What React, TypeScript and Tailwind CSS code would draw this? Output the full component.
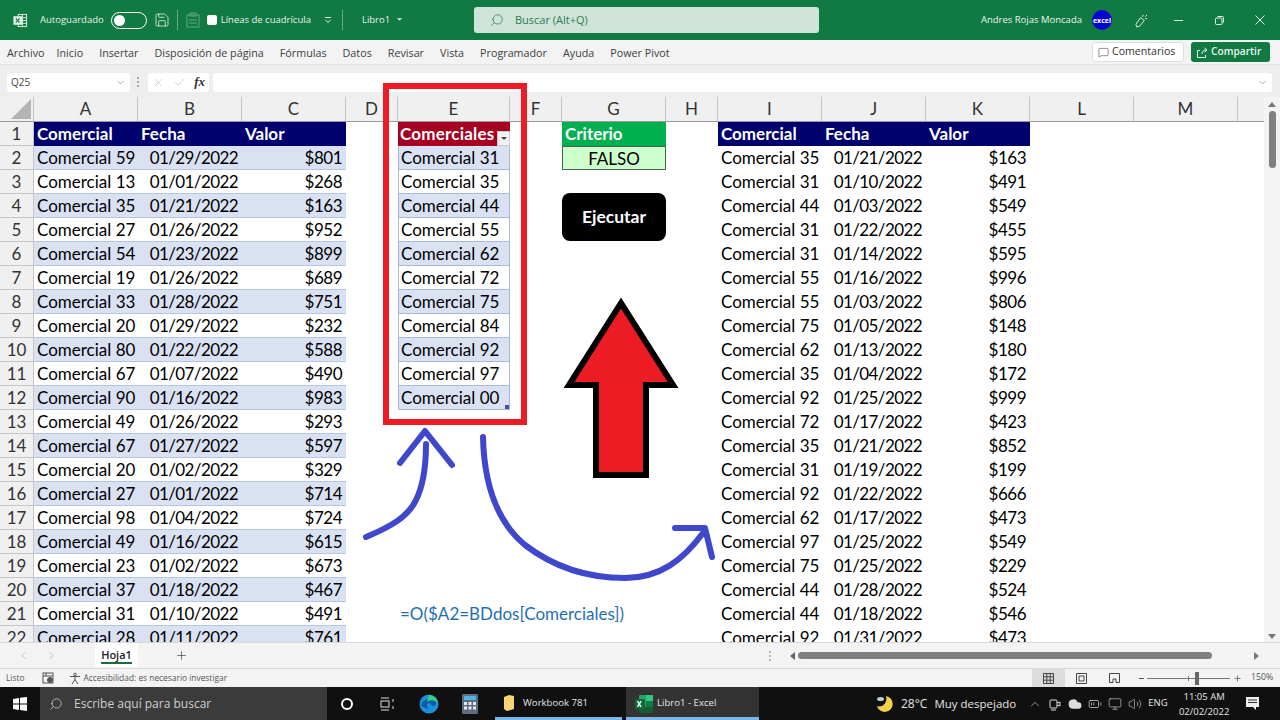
import {
  Save, Search, ChevronDown, X, Check, ChevronLeft, ChevronRight, Plus, MessageSquare,
  ChevronUp, Cloud, Volume2, Monitor, BatteryMedium,
} from "lucide-react"

const colNames = ["A", "B", "C", "D", "E", "F", "G", "H", "I", "J", "K", "L", "M"]
const colWidths = [104, 104, 104, 52, 112, 52, 104, 52, 104, 104, 104, 104, 104]

const leftRows = [
  ["59", "01/29/2022", "801"], ["13", "01/01/2022", "268"], ["35", "01/21/2022", "163"],
  ["27", "01/26/2022", "952"], ["54", "01/23/2022", "899"], ["19", "01/26/2022", "689"],
  ["33", "01/28/2022", "751"], ["20", "01/29/2022", "232"], ["80", "01/22/2022", "588"],
  ["67", "01/07/2022", "490"], ["90", "01/16/2022", "983"], ["49", "01/26/2022", "293"],
  ["67", "01/27/2022", "597"], ["20", "01/02/2022", "329"], ["27", "01/01/2022", "714"],
  ["98", "01/04/2022", "724"], ["49", "01/16/2022", "615"], ["23", "01/02/2022", "673"],
  ["37", "01/18/2022", "467"], ["31", "01/10/2022", "491"], ["28", "01/11/2022", "761"],
]

const rightRows = [
  ["35", "01/21/2022", "163"], ["31", "01/10/2022", "491"], ["44", "01/03/2022", "549"],
  ["31", "01/22/2022", "455"], ["31", "01/14/2022", "595"], ["55", "01/16/2022", "996"],
  ["55", "01/03/2022", "806"], ["75", "01/05/2022", "148"], ["62", "01/13/2022", "180"],
  ["35", "01/04/2022", "172"], ["92", "01/25/2022", "999"], ["72", "01/17/2022", "423"],
  ["35", "01/21/2022", "852"], ["31", "01/19/2022", "199"], ["92", "01/22/2022", "666"],
  ["62", "01/17/2022", "473"], ["97", "01/25/2022", "549"], ["75", "01/25/2022", "229"],
  ["44", "01/28/2022", "524"], ["44", "01/18/2022", "546"], ["92", "01/31/2022", "473"],
]

const comerciales = ["31", "35", "44", "55", "62", "72", "75", "84", "92", "97", "00"]

const menuItems = ["Inicio", "Insertar", "Disposición de página", "Fórmulas", "Datos", "Revisar", "Vista", "Programador", "Ayuda", "Power Pivot"]

function ExcelLogo({ size = 16 }: { size?: number }) {
  return (
    <svg width={size} height={size} viewBox="0 0 20 20">
      <rect x="5" y="1" width="14" height="18" rx="1" fill="#21a366" />
      <rect x="12" y="1" width="7" height="6" fill="#33c481" />
      <rect x="12" y="7" width="7" height="6" fill="#107c41" />
      <rect x="5" y="13" width="14" height="6" fill="#185c37" />
      <rect x="1" y="5" width="10" height="10" rx="1" fill="#0f6b3a" />
      <path d="M3.500 7.200l3.600 5.600M7.100 7.200l-3.600 5.600" stroke="#fff" strokeWidth="1.400" />
    </svg>
  )
}

function Title() {
  return (
    <div className="flex h-[40px] items-center whitespace-nowrap bg-[#117a43] text-[9.5px] text-[#e4f1ea]">
      <div className="flex w-[474px] shrink-0 items-center">
        <svg width="15" height="15" viewBox="0 0 16 16" fill="none" stroke="#e4f1ea" className="ml-[13px]">
          <rect x="5.500" y="1.500" width="9" height="13" fill="#117a43" />
          <path d="M5.500 5h9M5.500 8h9M5.500 11h9M10 1.500v13" />
          <rect x="1" y="4" width="8" height="8" fill="#e4f1ea" />
          <path d="M3 5.800l4 4.400M7 5.800l-4 4.400" stroke="#117a43" strokeWidth="1.200" />
        </svg>
        <span className="ml-[12px]">Autoguardado</span>
        <div className="ml-[7px] flex h-[17px] w-[36px] items-center rounded-full border border-white pl-[2px]">
          <div className="h-[11px] w-[11px] rounded-full bg-white" />
        </div>
        <Save size={16} strokeWidth={1.200} className="ml-[7px]" />
        <div className="ml-[7px] h-[20px] w-px bg-[#5fa883]" />
        <svg width="14" height="16" viewBox="0 0 14 16" fill="none" stroke="#5fa883" className="ml-[8px]">
          <rect x="1" y="3" width="12" height="12" />
          <rect x="4" y="1" width="6" height="3" />
          <path d="M3 8h8M3 11h8" />
        </svg>
        <div className="ml-[7px] h-[10px] w-[10px] rounded-[2px] bg-white" />
        <span className="ml-[4px]">Líneas de cuadrícula</span>
        <svg width="8" height="8" viewBox="0 0 8 8" fill="none" stroke="#e4f1ea" className="ml-[13px]">
          <path d="M1 1.500h6M1.500 4l2.500 2.500L6.500 4" />
        </svg>
        <div className="ml-[10px] h-[20px] w-px bg-[#5fa883]" />
        <span className="ml-[19px]">Libro1</span>
        <svg width="5" height="4" viewBox="0 0 6 4" fill="#e4f1ea" className="ml-[7px]">
          <path d="M0 0h6L3 3z" />
        </svg>
      </div>
      <div className="flex h-[26px] w-[345px] shrink-0 items-center rounded-[3px] bg-[#cfe4d8] text-[11px] text-[#2c7a55]">
        <Search size={14} strokeWidth={1.300} className="ml-[16px] -scale-x-100" />
        <span className="ml-[11px]">Buscar (Alt+Q)</span>
      </div>
      <div className="ml-auto flex items-center pr-[15px]">
        <span className="text-[#e8f4ee]">Andres Rojas Moncada</span>
        <div className="ml-[10px] flex h-[20px] w-[20px] items-center justify-center rounded-full bg-[#0505d0] text-[7px] font-bold leading-none text-white">
          excel
        </div>
        <svg width="15" height="15" viewBox="0 0 16 16" fill="none" stroke="#e4f1ea" className="ml-[22px]">
          <path d="M2 12l5-7 4 3-5 6-3 1zM9 4l1-2M12 4l2-2M12 6l2 0" />
        </svg>
        <svg width="9" height="9" viewBox="0 0 9 9" stroke="#e4f1ea" className="ml-[25px]">
          <path d="M0 4.500h9" />
        </svg>
        <svg width="9" height="9" viewBox="0 0 9 9" fill="none" stroke="#e4f1ea" className="ml-[32px]">
          <rect x=".5" y="2" width="6.500" height="6.500" rx="1" />
          <path d="M2.500 .5h5a1 1 0 0 1 1 1v5" />
        </svg>
        <svg width="10" height="10" viewBox="0 0 10 10" stroke="#e4f1ea" className="ml-[31px]">
          <path d="M.5 .5l9 9M9.500 .5l-9 9" />
        </svg>
      </div>
    </div>
  )
}

function Menu() {
  return (
    <div className="flex h-[25px] items-center whitespace-nowrap border-b border-[#e2e2e2] bg-[#f3f3f3] pl-[7px] text-[10.75px] text-[#404040]">
      <span className="mr-[12px] pt-[2px]">Archivo</span>
      <div className="flex gap-[16px] pt-[2px]">
        {menuItems.map((item) => (
          <span key={item}>{item}</span>
        ))}
      </div>
      <div className="ml-auto flex h-[20px] w-[92px] items-center gap-[3px] rounded-[3px] border border-[#dedede] bg-white pl-[5px] text-[10.6px] text-[#333]">
        <MessageSquare size={11} strokeWidth={1.200} />
        Comentarios
      </div>
      <div className="ml-[7px] mr-[10px] flex h-[20px] w-[79px] items-center gap-[3px] rounded-[3px] bg-[#117a43] pl-[6px] text-[10.2px] font-semibold text-[#e8f4ee]">
        <svg width="11" height="11" viewBox="0 0 11 11" fill="none" stroke="#e8f4ee">
          <path d="M3 3.500H.5v7h8V8M5 7c0-2.500 1.500-4 4-4M7.500 .8L10 3 7.500 5.200" />
        </svg>
        Compartir
      </div>
    </div>
  )
}

function FormulaBar() {
  return (
    <div className="flex h-[32px] items-center bg-[#eeeeee] pl-[7px] pr-[8px] pt-[2px] text-[10px] text-[#444]">
      <div className="flex h-[19px] w-[123px] items-center justify-between rounded-[3px] bg-white px-[4px]">
        Q25
        <ChevronDown size={11} strokeWidth={1.200} className="text-[#666]" />
      </div>
      <div className="ml-[7px] flex h-[10px] w-[2px] flex-col justify-between">
        <div className="h-[2px] bg-[#aaa]" />
        <div className="h-[2px] bg-[#aaa]" />
        <div className="h-[2px] bg-[#aaa]" />
      </div>
      <div className="ml-[9px] flex h-[19px] w-[61px] items-center justify-between rounded-[3px] bg-white px-[4px]">
        <X size={13} strokeWidth={0.900} className="text-[#aaa]" />
        <Check size={13} strokeWidth={0.900} className="text-[#aaa]" />
        <span className="font-['Liberation_Serif',serif] text-[13px] font-bold italic text-[#333]">fx</span>
      </div>
      <div className="ml-[4px] flex h-[19px] flex-1 items-center justify-end rounded-[3px] bg-white pr-[4px]">
        <ChevronDown size={11} strokeWidth={1.200} className="text-[#666]" />
      </div>
    </div>
  )
}

function HeaderRow() {
  return (
    <div className="flex h-[25px] items-stretch border-b border-[#9a9a9a] bg-[#f0f0f0] font-['Lato',sans-serif] text-[17px] text-[#333]">
      <div className="relative w-[34px] shrink-0 border-r border-[#c6c6c6]">
        <svg width="20" height="20" viewBox="0 0 20 20" className="absolute bottom-[2px] right-[2px]">
          <path d="M20 0v20H0z" fill="#b4b4b4" />
        </svg>
      </div>
      {colNames.map((name, i) => (
        <div
          key={name}
          className="flex shrink-0 items-center justify-center border-r border-[#c6c6c6]"
          style={{ width: colWidths[i] }}
        >
          {name}
        </div>
      ))}
    </div>
  )
}

function Cell({ w, className = "", children }: { w: number; className?: string; children?: React.ReactNode }) {
  return (
    <div className={`flex h-[24px] shrink-0 items-center whitespace-nowrap px-[3px] ${className}`} style={{ width: w }}>
      {children}
    </div>
  )
}

function NavyHeaders() {
  return (
    <>
      <Cell w={104} className="bg-[#00006e] pb-[2px] font-bold text-white">Comercial</Cell>
      <Cell w={104} className="bg-[#00006e] pb-[2px] font-bold text-white">Fecha</Cell>
      <Cell w={104} className="bg-[#00006e] pb-[2px] font-bold text-white">Valor</Cell>
    </>
  )
}

function LeftTable({ row }: { row: number }) {
  if (row === 1) return <NavyHeaders />
  const [n, date, value] = leftRows[row - 2]
  const band = row % 2 === 0 ? "bg-[#d9e1f2]" : "bg-white"
  return (
    <>
      <Cell w={104} className={`${band} border-b border-[#b4c6e7]`}>Comercial {n}</Cell>
      <Cell w={104} className={`${band} justify-end border-b border-[#b4c6e7] pr-[4px] tracking-[-0.6px]`}>{date}</Cell>
      <Cell w={104} className={`${band} justify-end border-b border-[#b4c6e7] pr-[4px] tracking-[-0.5px]`}>${value}</Cell>
    </>
  )
}

function MiddleTable({ row }: { row: number }) {
  if (row === 1) {
    return (
      <Cell w={112} className="relative bg-[#a50021] pb-[2px] pl-[2px] font-bold tracking-[0.2px] text-white">
        Comerciales
        <div className="absolute bottom-0 right-0 flex h-[15px] w-[13px] items-center justify-center border border-[#ccc] bg-[#f2f2f2]">
          <div className="h-0 w-0 border-x-[3px] border-t-[3px] border-x-transparent border-t-[#444]" />
        </div>
      </Cell>
    )
  }
  if (row <= 12) {
    const band = row % 2 === 0 ? "bg-[#d9e1f2]" : "bg-white"
    return (
      <Cell w={112} className={`relative ${band} border-x border-b border-[#a9b9dc] pl-[2px]`}>
        Comercial {comerciales[row - 2]}
        {row === 12 && <div className="absolute bottom-0 right-0 h-[4px] w-[4px] bg-[#3f51a5]" />}
      </Cell>
    )
  }
  if (row === 21) {
    return (
      <Cell w={112} className="pb-px pl-[2px] text-[#1f6fb0]">
        =O($A2=BDdos[Comerciales])
      </Cell>
    )
  }
  return <Cell w={112} />
}

function RightTable({ row }: { row: number }) {
  if (row === 1) return <NavyHeaders />
  const [n, date, value] = rightRows[row - 2]
  return (
    <>
      <Cell w={104} className="pb-px">Comercial {n}</Cell>
      <Cell w={104} className="justify-end pb-px pr-[4px] tracking-[-0.6px]">{date}</Cell>
      <Cell w={104} className="justify-end pb-px pr-[4px] tracking-[-0.5px]">${value}</Cell>
    </>
  )
}

function Row({ row }: { row: number }) {
  return (
    <div className="flex h-[24px] font-['Lato',sans-serif] text-[17px] leading-none text-black">
      <div className="flex w-[34px] shrink-0 items-center justify-center border-r border-b border-[#c6c6c6] bg-[#f0f0f0] text-[#333]">
        {row}
      </div>
      <LeftTable row={row} />
      <Cell w={52} />
      <MiddleTable row={row} />
      <Cell w={52} />
      {row === 1 ? (
        <Cell w={104} className="bg-[#00b050] pb-[2px] font-bold text-white">Criterio</Cell>
      ) : row === 2 ? (
        <Cell w={104} className="justify-center border border-[#44664e] bg-[#ccffcc]">FALSO</Cell>
      ) : (
        <Cell w={104} />
      )}
      <Cell w={52} />
      <RightTable row={row} />
    </div>
  )
}

// dibujos encima de la hoja, con coordenadas de la pagina
function Annotations() {
  return (
    <>
      <div className="absolute left-[383px] top-[83px] h-[342px] w-[144px] border-[6px] border-[#ed1c24]" />
      <div className="absolute left-[562px] top-[193px] flex h-[48px] w-[104px] items-center justify-center rounded-[8px] bg-black font-['Lato',sans-serif] text-[17.500px] font-bold text-white">
        Ejecutar
      </div>
      <svg width="1280" height="720" viewBox="0 0 1280 720" fill="none" className="pointer-events-none absolute left-0 top-0">
        <path d="M621 303L569 385H596V475H646V385H673Z" fill="#ed1c24" stroke="#000" strokeWidth="6" />
        <g stroke="#3f48cc" strokeWidth="6" strokeLinecap="round" strokeLinejoin="round">
          <path d="M366 537C390 527 408 517 416 500C424 484 426 465 426 444" />
          <path d="M400 463L425 431L452 465" />
          <path d="M483 437C484 480 495 520 525 545C555 568 590 578 625 578C660 578 683 560 703 533" />
          <path d="M675 528H705L712 557" />
        </g>
      </svg>
    </>
  )
}

function VScroll() {
  return (
    <div className="flex w-[16px] shrink-0 flex-col items-center bg-[#f3f3f3] pt-[5px]">
      <div className="h-0 w-0 border-x-[4px] border-b-[5px] border-x-transparent border-b-[#777]" />
      <div className="mt-[4px] h-[57px] w-[7px] rounded-full bg-[#808080]" />
      <div className="mb-[3px] mt-auto h-0 w-0 border-x-[4px] border-t-[5px] border-x-transparent border-t-[#777]" />
    </div>
  )
}

function SheetBar() {
  return (
    <div className="flex h-[26px] items-center border-t border-[#d9d9d9] bg-[#f3f3f3] text-[11px] text-[#333]">
      <ChevronLeft size={13} strokeWidth={1} className="ml-[17px] text-[#999]" />
      <ChevronRight size={13} strokeWidth={1} className="ml-[15px] text-[#999]" />
      <div className="ml-[37px] flex h-[24px] w-[43px] flex-col items-center justify-center self-start bg-white font-semibold">
        <span className="border-b-2 border-[#1b6b41] leading-[15px] text-[#222]">Hoja1</span>
      </div>
      <Plus size={13} strokeWidth={1.200} className="ml-[37px]" />
      <div className="ml-[581px] flex h-[10px] w-[2px] flex-col justify-between">
        <div className="h-[2px] bg-[#bbb]" />
        <div className="h-[2px] bg-[#bbb]" />
        <div className="h-[2px] bg-[#bbb]" />
      </div>
      <div className="ml-[19px] h-0 w-0 border-y-[4px] border-r-[5px] border-y-transparent border-r-[#666]" />
      <div className="ml-[3px] h-[7px] w-[414px] rounded-full bg-[#808080]" />
      <div className="ml-[42px] h-0 w-0 border-y-[4px] border-l-[5px] border-y-transparent border-l-[#777]" />
    </div>
  )
}

function StatusBar() {
  return (
    <div className="flex h-[19px] items-center whitespace-nowrap border-t border-[#d9d9d9] bg-[#f3f3f3] pl-[6px] pr-[4px] text-[8.400px] text-[#555]">
      <span>Listo</span>
      <svg width="13" height="13" viewBox="0 0 13 13" fill="none" stroke="#555" className="ml-[17px]">
        <rect x="1" y="1" width="10" height="10" />
        <path d="M1 4h10M4 1v3" />
        <circle cx="8" cy="8" r="2.500" fill="#555" />
      </svg>
      <svg width="13" height="13" viewBox="0 0 13 13" fill="none" stroke="#555" className="ml-[14px]">
        <circle cx="6" cy="2.500" r="1.300" />
        <path d="M1 4.500h10M6 4.500v3L3 12M6 7.500l3 4.500" />
      </svg>
      <span className="ml-[2px]">Accesibilidad: es necesario investigar</span>
      <div className="ml-auto flex h-[18px] w-[33px] items-center justify-center bg-[#dcdcdc]">
        <svg width="11" height="11" viewBox="0 0 11 11" fill="none" stroke="#444">
          <path d="M.5 .5h10v10H.5zM.5 3.800h10M.5 7.200h10M3.800 .5v10M7.200 .5v10" />
        </svg>
      </div>
      <div className="flex w-[33px] justify-center">
        <svg width="11" height="11" viewBox="0 0 11 11" fill="none" stroke="#444">
          <path d="M.5 .5h10v10H.5zM3 3h5v5H3z" />
        </svg>
      </div>
      <div className="flex w-[33px] justify-center">
        <svg width="11" height="11" viewBox="0 0 11 11" fill="none" stroke="#444">
          <path d="M.5 .5h10v9H7V6H4v3.500H.5z" />
        </svg>
      </div>
      <span className="ml-[8px] h-px w-[5px] bg-[#555]" />
      <div className="relative ml-[3px] h-px w-[83px] bg-[#777]">
        <div className="absolute left-[48px] top-[-6px] h-[13px] w-[4px] bg-[#666]" />
        <div className="absolute left-[41px] top-[-2px] h-[5px] w-px bg-[#777]" />
      </div>
      <Plus size={9} className="ml-[3px]" />
      <span className="ml-[9px] w-[25px] text-[8.800px]">150%</span>
    </div>
  )
}

function TaskBar() {
  return (
    <div className="flex h-[33px] items-center whitespace-nowrap bg-[#101010] text-[#e5e5e5]">
      <svg width="14" height="14" viewBox="0 0 14 14" fill="#fff" className="ml-[13px]">
        <path d="M0 2l6-1v5.500H0zM7 .8L14 0v6.500H7zM0 7.500h6V13l-6-1zM7 7.500h7V14l-7-.9z" />
      </svg>
      <div className="ml-[13px] flex h-[33px] w-[287px] items-center bg-[#3b3b3b] text-[12px] text-[#cfcfcf]">
        <Search size={14} strokeWidth={1.300} className="ml-[9px] -scale-x-100" />
        <span className="ml-[11px]">Escribe aquí para buscar</span>
      </div>
      <div className="ml-[14px] h-[12px] w-[12px] rounded-full border-2 border-white" />
      <svg width="14" height="14" viewBox="0 0 14 14" fill="none" stroke="#ddd" className="ml-[27px]">
        <path d="M1 1h8M1 13h8M13 2v3M13 9v3" />
        <rect x="1" y="4" width="8" height="6" />
      </svg>
      <svg width="20" height="20" viewBox="0 0 20 20" className="ml-[25px]">
        <circle cx="10" cy="10" r="9.500" fill="#1b8fd8" />
        <path d="M2 12c1-7 10-9 14-5 2 2 1 5-2 5-2 0-1-3-4-3-3 0-3 5 1 7" fill="#0c5aa8" />
        <path d="M10 1c4 0 8 3 9 8-3-3-8-4-11-1z" fill="#39d07c" />
      </svg>
      <svg width="16" height="20" viewBox="0 0 16 20" className="ml-[23px]">
        <rect width="16" height="20" rx="1" fill="#5c6b80" />
        <rect x="2" y="2" width="12" height="4" fill="#4fb3e6" />
        <path d="M2 8h3v3H2zM6.500 8h3v3h-3zM11 8h3v3h-3zM2 12.500h3v3H2zM6.500 12.500h3v3h-3zM11 12.500h3v3h-3z" fill="#e6ebf2" />
      </svg>
      <div className="ml-[17px] flex h-[33px] w-[127px] items-center border-b-[3px] border-[#7ab6e6] pl-[8px] pt-[3px] text-[9.600px]">
        <svg width="13" height="17" viewBox="0 0 13 17">
          <path d="M1 2l5-2 5 1v13l-7 2-3-2z" fill="#f7d774" />
        </svg>
        <span className="ml-[7px]">Workbook 781</span>
      </div>
      <div className="ml-[4px] flex h-[33px] w-[133px] items-center border-b-[3px] border-[#7ab6e6] bg-[#333] pl-[8px] pt-[3px] text-[9.600px]">
        <ExcelLogo size={20} />
        <span className="ml-[3px]">Libro1 - Excel</span>
      </div>
      <svg width="17" height="17" viewBox="0 0 17 17" className="ml-[117px]">
        <path d="M10 1a8 8 0 1 1-9 10c5 2 11-3 9-10z" fill="#f2d24b" />
        <ellipse cx="4.500" cy="4" rx="3.500" ry="2" fill="#b8cfe0" />
      </svg>
      <span className="ml-[8px] text-[12px]">28°C</span>
      <span className="ml-[7px] text-[11.500px]">Muy despejado</span>
      <ChevronUp size={14} strokeWidth={1} className="ml-[12px]" />
      <svg width="12" height="14" viewBox="0 0 12 14" fill="none" stroke="#ddd" className="ml-[7px]">
        <rect x="1" y="3" width="7" height="8" rx="1" />
        <path d="M8 6l3-1v4l-3-1M2 13h5" />
      </svg>
      <Cloud size={14} fill="#ddd" stroke="#ddd" className="ml-[7px]" />
      <BatteryMedium size={14} strokeWidth={1.200} className="ml-[6px]" />
      <Monitor size={14} strokeWidth={1} className="ml-[6px]" />
      <Volume2 size={14} strokeWidth={1} className="ml-[6px]" />
      <span className="ml-[6px] text-[9.500px]">ENG</span>
      <div className="ml-[11px] flex w-[51px] flex-col items-center text-[9.500px] leading-[15px]">
        <span>11:05 AM</span>
        <span>02/02/2022</span>
      </div>
      <svg width="15" height="15" viewBox="0 0 15 15" className="ml-[15px]">
        <path d="M1 1h13v10h-3v3l-3-3H1z" fill="#eee" />
        <path d="M3 4h9M3 6.500h9" stroke="#333" />
      </svg>
    </div>
  )
}

export default function App() {
  return (
    <div className="relative flex h-[720px] w-[1280px] flex-col overflow-hidden bg-white font-['Open_Sans',sans-serif]">
      <Title />
      <Menu />
      <FormulaBar />
      <div className="flex h-[545px]">
        <div className="flex-1 overflow-hidden">
          <HeaderRow />
          {Array.from({ length: 22 }, (_, i) => (
            <Row key={i} row={i + 1} />
          ))}
        </div>
        <VScroll />
      </div>
      <SheetBar />
      <StatusBar />
      <TaskBar />
      <Annotations />
    </div>
  )
}
